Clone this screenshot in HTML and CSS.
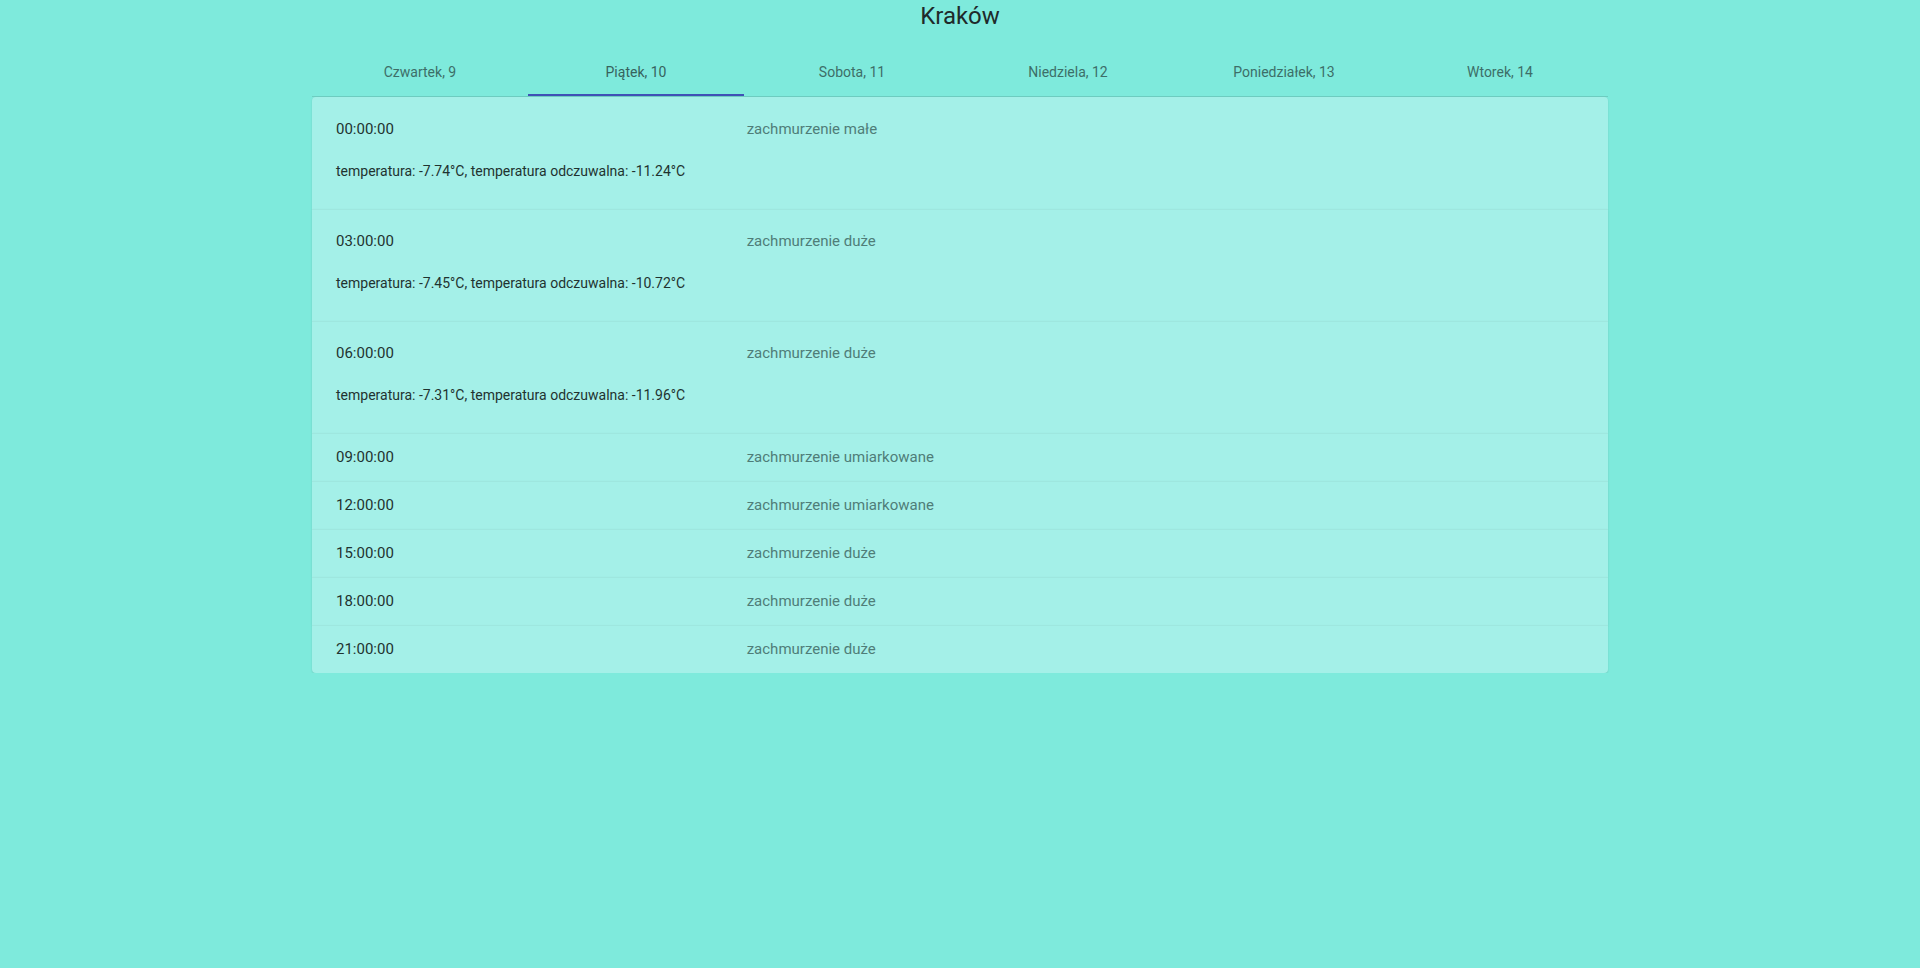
FILE: index.html
```html
<!DOCTYPE html>
<html lang="pl">
<head>
<meta charset="utf-8">
<title>Kraków</title>
<link rel="stylesheet" href="styles.css">
</head>
<body>
<div class="page">
  <h1 class="city">Kraków</h1>
  <nav class="tabs">
    <div class="tab">Czwartek, 9</div>
    <div class="tab active">Piątek, 10</div>
    <div class="tab">Sobota, 11</div>
    <div class="tab">Niedziela, 12</div>
    <div class="tab">Poniedziałek, 13</div>
    <div class="tab">Wtorek, 14</div>
  </nav>
  <div class="accordion">
    <div class="panel expanded">
      <div class="header"><span class="time">00:00:00</span><span class="desc">zachmurzenie małe</span></div>
      <div class="body">temperatura: -7.74°C, temperatura odczuwalna: -11.24°C</div>
    </div>
    <div class="panel expanded">
      <div class="header"><span class="time">03:00:00</span><span class="desc">zachmurzenie duże</span></div>
      <div class="body">temperatura: -7.45°C, temperatura odczuwalna: -10.72°C</div>
    </div>
    <div class="panel expanded">
      <div class="header"><span class="time">06:00:00</span><span class="desc">zachmurzenie duże</span></div>
      <div class="body">temperatura: -7.31°C, temperatura odczuwalna: -11.96°C</div>
    </div>
    <div class="panel">
      <div class="header"><span class="time">09:00:00</span><span class="desc">zachmurzenie umiarkowane</span></div>
    </div>
    <div class="panel">
      <div class="header"><span class="time">12:00:00</span><span class="desc">zachmurzenie umiarkowane</span></div>
    </div>
    <div class="panel">
      <div class="header"><span class="time">15:00:00</span><span class="desc">zachmurzenie duże</span></div>
    </div>
    <div class="panel">
      <div class="header"><span class="time">18:00:00</span><span class="desc">zachmurzenie duże</span></div>
    </div>
    <div class="panel">
      <div class="header"><span class="time">21:00:00</span><span class="desc">zachmurzenie duże</span></div>
    </div>
  </div>
</div>
</body>
</html>
```
FILE: styles.css
```css
html, body {
  margin: 0;
  padding: 0;
  background: #7eeadc;
  font-family: Roboto, "Noto Sans", sans-serif;
  color: rgba(0, 0, 0, 0.87);
  min-height: 100%;
}

.page {
  width: 1296px;
  margin: 0 auto;
}

.city {
  margin: 0 0 16px;
  font-size: 24px;
  line-height: 32px;
  font-weight: 400;
  text-align: center;
  color: #1f2a2a;
}

.tabs {
  display: flex;
  height: 48px;
  border-bottom: 1px solid rgba(0, 0, 0, 0.12);
}

.tab {
  flex: 1 1 0;
  display: flex;
  align-items: center;
  justify-content: center;
  font-size: 14px;
  color: #3d6e68;
  position: relative;
}

.tab.active {
  color: #37625d;
}

.tab.active::after {
  content: "";
  position: absolute;
  left: 0;
  right: 0;
  bottom: 0;
  height: 2px;
  background: #3f51b5;
}

.accordion {
  display: flex;
  flex-direction: column;
}

.panel {
  background: #a4f0e8;
  box-shadow: 0 1px 2px rgba(0, 0, 0, 0.12);
  border-top: 1px solid rgba(0, 0, 0, 0.035);
}

.panel:first-child {
  border-top: none;
  border-radius: 4px 4px 0 0;
}

.panel:last-child {
  border-radius: 0 0 4px 4px;
}

.header {
  display: flex;
  align-items: center;
  height: 48px;
  padding: 0 56px 0 24px;
  font-size: 15px;
}

.panel.expanded .header {
  height: 64px;
}

.panel:not(:first-child) .header {
  margin-top: -1px;
}

.time {
  flex: 1 1 0;
  margin-right: 16px;
  color: #1f3330;
}

.desc {
  flex: 2 1 0;
  margin-right: 16px;
  color: #4f7d78;
}

.body {
  padding: 0 24px 28px;
  font-size: 14px;
  line-height: 20px;
  color: #1f3330;
}
```
